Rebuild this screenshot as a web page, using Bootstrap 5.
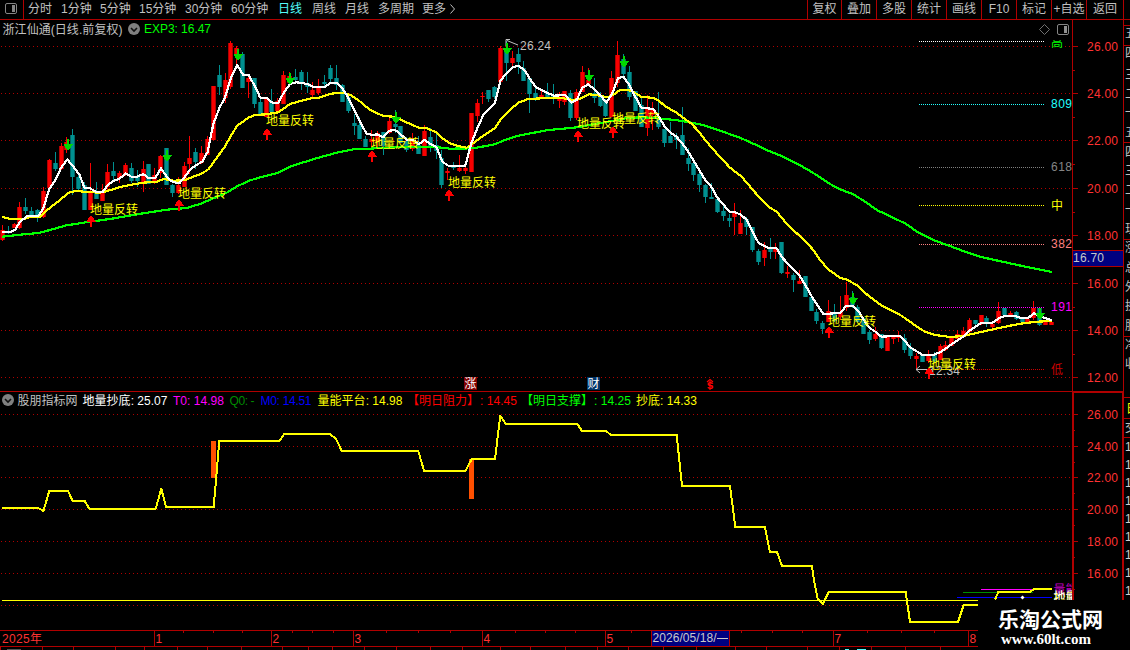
<!DOCTYPE html>
<html lang="zh-CN">
<head>
<meta charset="utf-8">
<title>浙江仙通 日线</title>
<link href="https://cdn.jsdelivr.net/npm/bootstrap@5.3.0/dist/css/bootstrap.min.css" rel="stylesheet">
<style>
body{background:#000;color:#c0c0c0;font:12px/18px "Liberation Sans","Noto Sans CJK SC",sans-serif;width:1130px;height:650px}
.topbar{height:20px;border-bottom:1px solid #b00000}
.side-toggle{width:24px;border-right:1px solid #b00000}
.periods{display:grid;grid-template-columns:33px 39px 39px 46px 46px 47px 34px 33px 33px 44px 50px;padding-left:4px;white-space:nowrap}
.periods .on{color:#54fcfc}
.tools{display:grid;grid-template-columns:34px repeat(7,35px) 37px;border-right:1px solid #b00000;margin-right:6px;white-space:nowrap}
.tools span{border-left:1px solid #b00000;text-align:center}
.board{height:630px}
svg{display:block;flex:none}
svg text{white-space:pre}
.crisp{shape-rendering:crispEdges}
</style>
</head>
<body class="d-flex flex-column overflow-hidden">
<header class="topbar d-flex justify-content-between flex-shrink-0">
  <nav class="d-flex">
    <div class="side-toggle"><svg width="23" height="19"><rect x="5.500" y="3.500" width="11" height="10" rx="1.500" fill="none" stroke="#858585"/><rect x="12" y="5" width="3" height="7" fill="#858585"/></svg></div>
    <div class="periods"><span>分时</span><span>1分钟</span><span>5分钟</span><span>15分钟</span><span>30分钟</span><span>60分钟</span><span class="on">日线</span><span>周线</span><span>月线</span><span>多周期</span><span class="d-flex">更多<svg width="12" height="18"><path d="M4.500 4.500l4 4.500-4 4.500" fill="none" stroke="#c0c0c0"/></svg></span></div>
  </nav>
  <nav class="tools"><span>复权</span><span>叠加</span><span>多股</span><span>统计</span><span>画线</span><span>F10</span><span>标记</span><span>+自选</span><span>返回</span></nav>
</header>
<main class="board d-flex">
  <svg id="chart" width="1130" height="630" viewBox="0 20 1130 630"></svg>
</main>
<script>
const out=[];
const add=s=>out.push(s);
const RED='#b00000', AX='#ff3232', up='#f80000', dn='#009090';
const rect=(x,y,w,h,f)=>add(`<rect class="crisp" x="${x}" y="${y}" width="${w}" height="${h}" fill="${f}"/>`);
const txt=(s,x,y,f,w,extra='')=>add(`<text x="${x}" y="${y}" fill="${f}" ${w?`textLength="${w}"`:''} ${extra}>${s}</text>`);
const hline=(x1,x2,y,f,dash='')=>add(`<path class="crisp" d="M${x1} ${y+.5}H${x2}" stroke="${f}" ${dash?`stroke-dasharray="${dash}"`:''}/>`);

// grid and price scales
const main=[46,93,140,188,235,283,330,377], sub=[414,446,477,509,541,573,605];
[...main,...sub].forEach(y=>hline(1,1072,y,'#b00000','1 3'));
rect(1072,20,1,372,RED);rect(1072,391,2,209,RED);rect(1123,20,1,372,RED);rect(1122,391,2,209,RED);
main.forEach((y,i)=>{rect(1073,y,5,1,RED);if(i<7)rect(1073,y+24,2,1,RED);txt((26-2*i)+'.00',1087,y+5,AX,31)});
sub.slice(0,6).forEach((y,i)=>{rect(1074,y,4,1,RED);rect(1074,y+16,1,1,RED);txt((26-2*i)+'.00',1087,y+5,AX,31)});
rect(0,391,1124,1,RED);rect(1072,391,52,2,RED);
rect(1073,250,50,16,RED);rect(1073,251,50,15,'#000080');rect(1073,266,50,1,RED);txt('16.70',1073,262,'#c8c8c8',31);

// candles: direction, high, body top, body bottom, low
const K=`r225,230,240,241 t226,231,233,234 r223,224,228,228 r202,207,228,229 t198,207,211,214 t207,211,215,216 t209,210,217,222 r187,191,217,218 r159,160,188,190 t152,163,169,171 r143,146,169,170 r137,142,150,153 t129,135,177,195 t175,177,189,190 t182,185,210,210 r163,192,210,210 t182,191,199,199 r184,191,201,201 r164,172,187,190 t162,171,176,182 r171,173,178,183 r163,165,175,176 t163,168,181,183 t170,176,181,187 r161,169,182,192 t164,164,184,184 r168,175,183,184 r155,156,173,178 t148,148,185,185 t184,185,193,197 r177,185,193,194 r162,166,187,187 r136,158,164,174 t148,152,162,169 r146,153,163,164 r136,139,155,155
r86,86,140,140 t65,75,87,95 r73,80,98,103 r41,43,87,89 r46,48,54,65 t52,54,88,88 r75,78,82,98 t78,78,104,108 t98,102,114,114 r97,98,117,117 t89,102,112,114 r98,101,111,112 r71,75,104,104 r72,76,83,84 t69,77,80,83 t70,72,83,90 t72,83,87,93 r82,90,95,99 r79,87,93,95 t75,82,84,88 t65,68,79,82 t65,78,85,90 t84,85,102,102 t96,97,111,113 t114,123,126,135 t117,125,139,139 t136,139,147,147
r130,139,142,147 r131,133,142,148 t132,132,146,155 r118,121,133,134 t110,124,127,133 t126,126,143,143 t137,141,150,152 r133,140,149,151 t136,145,154,154 r125,131,156,156 t128,137,148,152 t133,145,151,159 t150,158,185,188 r168,171,173,180 t162,166,168,170 r155,168,171,172 r163,168,171,174 r113,113,172,172 r99,103,116,122 r92,96,97,104 t90,90,99,102 t86,87,97,99 r46,48,82,82 t41,50,63,81 r51,58,63,67 t48,54,62,74 t61,68,81,81 t78,78,94,113 t87,93,98,101 r90,95,98,99 t83,93,98,98 t84,96,99,104 r92,97,101,108 r91,91,102,105 t90,93,118,121 r89,92,118,120
r66,72,92,92 r68,80,84,85 t78,93,98,103 t92,96,106,107 t99,101,116,117 r71,78,117,117 r41,55,83,87 t54,59,74,77 t66,72,97,100 t91,91,111,111 t97,105,127,127 r95,108,128,136 r102,110,115,130 t92,117,127,129 t129,129,143,147 t122,136,143,143 t133,136,140,149 t107,135,155,155 t148,158,164,171 t162,163,175,181 t172,174,185,192 t184,185,197,203
t183,197,199,199 t199,199,212,213 t206,211,216,221 t214,218,221,227 r203,213,217,235 r210,223,234,234 t217,219,227,235 t227,227,250,252 t249,251,262,265 r242,250,258,266 t238,248,252,259 r243,248,252,259 t242,242,273,274 r266,272,274,278 t273,275,280,292 r270,281,284,284 t276,276,297,297 t296,297,311,311 t309,312,321,324 t321,323,329,334 r300,311,322,322 t304,313,321,322 r296,312,317,320 r282,295,308,311 t291,297,305,308 t305,307,322,322 t318,318,334,334 t330,332,340,344 r327,334,339,341 t334,334,348,349 r336,337,351,351 r335,337,339,344 r331,336,338,342 t334,338,350,353 t343,347,356,359 r353,356,359,370
t354,354,362,362 r350,354,361,363 t352,354,361,362 r344,346,360,360 r341,345,350,351 r337,338,346,346 r330,334,339,340 r327,331,337,338 r318,320,332,333 t320,320,324,327 r315,315,324,325 t316,318,324,327 r322,324,327,328 r302,311,323,324 t308,308,315,316 r311,313,315,316 t311,312,319,320 t317,319,322,324 r317,319,322,323 r301,308,318,320 t308,308,325,326 r321,322,325,325 r321,322,325,325`.split(/\s+/);
K.forEach((k,i)=>{
  const c=k[0]=='r'?up:dn, e=k[0]=='r'?'#b00000':'#006464', [h,t,b,l]=k.slice(1).split(',').map(Number), x=Math.round(1.9+5.86*i);
  rect(x-2,t,5,b-t,e);rect(x-1,t,3,b-t,c);rect(x,h,1,l-h,c);
});

// fibonacci levels
[[41,'#fff'],[104,'#2ff'],[167,'#808080'],[205,'#ff0'],[244,'#ff8080'],[307,'#f0f'],[369,'#c00']].forEach(([y,c])=>hline(919,1044,y,c,'1 1'));
[['809',108,'#2ff'],['618',171,'#858585'],['382',248,'#ff8080'],['191',311,'#f0f']].forEach(([s,y,c])=>txt(s,1051,y,c,21));
txt('中',1051,209.5,'#ff0');txt('低',1051,373.5,'#c80000');
add('<clipPath id="hi"><path d="M1045 40h30v8h-30z"/></clipPath>');
txt('高',1051,46.500,'#0f0',0,'clip-path="url(#hi)"');

// indicator curves: chunks of [origin x, origin y, points], in thirds of a pixel
const curve=(c,parts,w=2)=>{
  const p=parts.flatMap(([ox,oy,s])=>s.split(' ').map(q=>{const[a,b]=q.split(',').map(Number);return ((a+ox)/3).toFixed(1)+','+((b+oy)/3).toFixed(1)}));
  add(`<polyline class="crisp" points="${p.join(' ')}" fill="none" stroke="${c}" stroke-width="${w}" stroke-linejoin="round"/>`);
};
curve('#0f0',[[0,0,'7,710 60,704 115,699 150,690 200,676 270,665 330,657 430,640 500,629 560,624 600,612 640,595 680,578 712,559 745,543 780,532 835,518 870,500 935,479 960,472 1010,458 1060,448 1110,446'],
[600,0,'540,444 640,440 700,440 750,446 820,445 884,433 920,418 955,407 1045,390'],
[1680,0,'0,387 50,382 100,373 160,362 200,354 250,352 290,355 345,360 385,366 425,374 480,392 540,413 600,440'],
[1980,450,'320,0 370,20 415,43 455,66 510,102 545,120 580,133 620,158 650,180 700,203'],
[2700,540,'0,123 20,133 50,155 100,180 190,213 240,230 280,239 330,250 380,261 455,276']],2.2);
curve('#ff0',[[0,0,'7,651 30,657 70,657 95,650 120,650 148,625 184,597 205,578 230,572 250,575 300,578 325,572 365,560 400,553 430,548 470,545 490,537 520,542 553,541 580,530 607,520 625,508 640,488 658,463 676,438 694,405 712,377 745,353 765,345 799,343 835,337 870,312 904,302 940,293 958,293 992,281 1030,278 1055,287 1081,305'],
[600,0,'510,330 550,348 580,350 604,360 656,383 680,385 709,397 727,415 750,430 775,438 800,443 820,430 850,407 884,385 901,360 930,330 955,308 985,297 1060,293'],
[1680,0,'0,293 40,300 60,296 88,283 120,287 142,292 160,285 180,270 205,270 222,277 244,290 280,294 298,303 315,319 345,335 375,357 395,372 415,393 437,422 470,460'],
[1980,450,'210,53 245,80 300,145 330,173 350,185 385,227 435,272 460,300 480,330 505,358 540,383 560,389 590,405 625,437 665,467 715,491'],
[2700,540,'20,418 50,440 75,455 105,465 150,471 190,468 225,460 270,450 330,437 370,430 410,425 455,423']],2.2);
curve('#fff',[[0,0,'7,697 30,697 45,690 60,665 82,648 115,648 130,625 148,567 166,540 184,502 202,478 220,500 238,523 254,565 270,565 290,577 307,577 325,553 343,542 360,535 377,520 394,530 412,530 430,522 447,535 465,535 483,505 500,530 517,545 538,550 553,533 571,508 589,495 607,485 623,455 640,372 658,325 676,290 694,230 712,195 730,225 746,225 764,258 781,293 799,293 817,308 835,308 852,277 870,252 890,247 922,252 940,260 976,260 992,248 1009,248 1027,265 1045,293 1063,330 1081,367 1099,400 1115,405'],
[600,0,'532,403 550,412 568,392 586,390 604,405 621,420 640,420 656,433 674,420 691,432 709,440 727,485 745,497 796,497 814,430 832,385 850,345 884,310 901,243 919,220 937,203 955,197 973,210 991,238 1009,263 1061,287 1096,285 1114,308'],
[1680,0,'50,300 67,263 85,253 103,268 121,285 139,308 156,282 174,235 190,230 208,255 226,290 244,323 280,327 298,352 313,378 331,397 349,410 367,430 385,455 403,485 421,515 437,542'],
[1980,450,'154,110 172,143 190,163 208,185 226,187 244,195 260,210 278,245 296,280 323,293 349,293 367,323 400,358 418,375 436,405 454,437 472,465 490,492 541,489 559,467 577,467 595,483 613,512 628,533 646,545 664,560 718,557'],
[2700,540,'15,483 30,502 67,524 103,524 121,516 139,505 155,492 190,470 208,453 226,440 244,428 278,428 296,415 313,408 345,408 362,414 385,414 401,400 436,415 455,420']],2.2);

// extreme price call-outs
add('<path d="M506 46V39.500h4M507 40.500l6 2.500 5 2" fill="none" stroke="#c0c0c0"/>');txt('26.24',520,50,'#c0c0c0',31);
add('<path d="M920 366l-4 3.500 4 3.500M916 369.500h16" fill="none" stroke="#c0c0c0"/>');txt('12.34',929,374.500,'#c0c0c0',31);

// signals
[[68,139],[167,150],[238,49],[290,73],[396,112],[507,43],[589,70],[624,56],[853,293],[1040,308]].forEach(([x,y])=>
  add(`<path class="crisp" d="M${x-1} ${y}h2v5h3.500v1l-4.500 6-4.500-6v-1h3.500z" fill="#00d800"/>`));
[[91,215],[179,199],[267,128],[372,150],[449,189],[578,130],[613,126],[829,326],[929,367]].forEach(([x,y],i)=>{
  add(`<path class="crisp" d="M${x} ${y}l4.500 6v1h-3.500v5h-2v-5h-3.500v-1z" fill="#f00"/>`);
  txt('地量反转',[90,178,266,371,448,577,612,828,928][i],[213.5,198,124.5,147.5,186.5,127.5,122.5,325.5,368.5][i],'#ff0',48);
});

// titles
const chev=(x,y)=>add(`<circle cx="${x}" cy="${y}" r="6" fill="#808080"/><path d="M${x-3} ${y-1}l3 3 3-3" fill="none" stroke="#111" stroke-width="1.600"/>`);
txt('浙江仙通(日线.前复权)',2.5,33.5,'#c0c0c0',120);chev(134,29);txt('EXP3: 16.47',144,33,'#0f0',67);
add('<path d="M1044.500 24.500l5 5-5 5-5-5z" fill="none" stroke="#707070"/><rect x="1057.500" y="24.500" width="11" height="10" rx="1.500" fill="none" stroke="#858585"/><rect x="1064" y="26" width="3" height="7" fill="#909090"/>');
chev(8,400);
[['股朋指标网',17.5,60,'#c0c0c0'],['地量抄底: 25.07',82.5,85,'#fff'],['T0: 14.98',173,51,'#f0f'],['Q0: -',229.5,25,'#008c00'],['M0: 14.51',260.5,51,'#00f'],['量能平台: 14.98',317.5,85,'#ff0'],['【明日阻力】',407,72,'#f00'],[': 14.45',480,37,'#f00'],['【明日支撑】',521,72,'#0f0'],[': 14.25',594,37,'#0f0'],['抄底: 14.33',636,61,'#ff0']].forEach(([s,x,w,c])=>txt(s,x,404.5,c,w));

// event markers
rect(464,377,13,13,'#800000');txt('涨',464.5,388,'#fff');rect(587,377,13,13,'#003468');txt('财',587.5,388,'#fff');
txt('s',706.7,389,'#f00',0,'font-weight="bold"');add('<path d="M707 382l3-2.500 3 2.500M710 381v9" fill="none" stroke="#f00" stroke-width="1.200"/>');

// lower panel
rect(211,441,5,37,'#ff5000');rect(469,459,5,40,'#ff5000');
hline(2,978,600,'#ff0');hline(981,1052,589,'#f0f');hline(963,1033,592,'#008c00');hline(957,1052,597,'#00f');
curve('#ff0',[[0,1140,'7,384 113,384 122,388 130,394 148,333 204,333 218,363 254,363 268,386 467,386 484,326 498,381 641,381 658,183 838,183 853,162 990,162 1009,178 1025,213'],
[1110,1110,'0,243 145,243 162,302 287,302 305,267 375,267 391,137 408,162 622,162 636,183 709,183 722,195 920,195 936,348 1080,348'],
[0,0,'2206,1581 2295,1581 2310,1656 2331,1656 2346,1698 2436,1698'],
[1800,1740,'642,0 653,57 669,72 686,36 917,36 930,126 1074,126 1091,75 1134,75']]);
curve('#ff0',[[2700,1680,'285,119 295,96 390,96 402,87 455,87']]);
add('<path d="M1022.500 595.500l2 2-2 2-2-2z" fill="#fff"/><clipPath id="tag"><path d="M1050 580h22v20h-22z"/></clipPath>');
txt('量能',1053.5,594,'#c000c0',0,'clip-path="url(#tag)"');txt('抄底',1053.5,602,'#ff0',0,'clip-path="url(#tag)"');txt('地量',1053.5,601,'#fff',0,'clip-path="url(#tag)"');

// date axis
rect(0,630,978,1,RED);rect(0,646,978,1,RED);
[[154,'1'],[271,'2'],[353,'3'],[482,'4'],[605,'5'],[833,'7'],[968,'8']].forEach(([x,s])=>{rect(x,630,1,17,RED);txt(s,x+1.5,643,AX)});
[183,213,242,292,312,333,386,418,450,515,545,575,631,741,772,802,867,901,934].forEach(x=>rect(x,631,1,2,RED));
[0,42,73,115,144,177,207,241,282,308,332,364,396,430,462,500,530,565,597,628,663,696,735,766,807,839,871,905,940].forEach(x=>rect(x,647,1,3,RED));
txt('2025年',2,643,AX,40);
rect(651,630,79,17,RED);rect(652,631,77,15,'#000080');txt('2026/05/18/',652.5,642,'#c8c8c8',64);rect(717,638,11,1,'#c8c8c8');
rect(845,649,4,1,'#54fcfc');rect(857,649,9,1,'#54fcfc');rect(7,649,14,1,'#555');

// quote column, cut by the window edge
[25,45,142,239,336,397,418,437].forEach(y=>rect(1124,y,6,1,RED));
'五四三二一五四三二一现涨总外换股净收'.split('').forEach((s,i)=>txt(s,1125,38+19.3*i+(i>1?2:0),'#c0c0c0'));
txt('日',1126,413,'#ff0');txt('交',1125,432,'#c0c0c0');
for(let i=0;i<9;i++)txt('1',1125,451+18*i,'#d0d0d0');

// site badge
rect(978,600,152,50,'#000');
txt('乐淘公式网',998,627,'#fff',105,'style="font:bold 21px \'Noto Sans CJK SC\',sans-serif"');
txt('www.60lt.com',1001,644,'#fff',90,'style="font:bold 15px \'Liberation Serif\',serif"');
document.getElementById('chart').innerHTML=out.join('');
</script>
<script src="https://cdn.jsdelivr.net/npm/bootstrap@5.3.0/dist/js/bootstrap.bundle.min.js"></script>
</body>
</html>
